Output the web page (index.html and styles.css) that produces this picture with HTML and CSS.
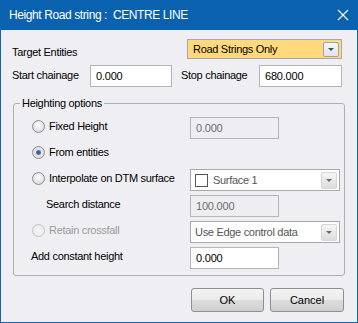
FILE: index.html
```html
<!DOCTYPE html>
<html lang="en">
  <head>
    <meta charset="utf-8" />
    <title>Height Road string</title>
    <link rel="stylesheet" href="styles.css">
  </head>

  <body>
    <div class="window">
      <div class="titlebar">
        <span class="title">Height Road string :&nbsp; CENTRE LINE</span>
        <svg class="close" width="12" height="12" viewBox="0 0 12 12">
          <path d="M1 1 L11 11 M11 1 L1 11" stroke="#fff" stroke-width="1.1" fill="none" />
        </svg>
      </div>

      <div class="content">
        <div class="row target-row">
          <span class="lbl target">Target Entities</span>
          <div class="combo yellow">
            <span class="combo-text">Road Strings Only</span>
            <span class="drop"></span>
          </div>
        </div>

        <div class="row chain-row">
          <span class="lbl chain">Start chainage</span>
          <input class="field start" type="text" value="0.000" />
          <span class="lbl chain stop">Stop chainage</span>
          <input class="field stopfield" type="text" value="680.000" />
        </div>

        <fieldset class="group">
          <legend>Heighting options</legend>
          <div class="opts">
            <label class="opt"><input type="radio" name="h" /> Fixed Height</label>
            <input class="field small disabled" type="text" value="0.000" disabled />

            <label class="opt"><input type="radio" name="h" checked /> From entities</label>
            <span></span>

            <label class="opt"><input type="radio" name="h" /> Interpolate on DTM surface</label>
            <div class="combo wide">
              <span class="check"></span>
              <span class="combo-text muted">Surface 1</span>
              <span class="drop dim"></span>
            </div>

            <span class="opt search">Search distance</span>
            <input class="field small disabled" type="text" value="100.000" disabled />

            <label class="opt off"><input type="radio" name="r" disabled /> Retain crossfall</label>
            <div class="combo wide">
              <span class="combo-text muted">Use Edge control data</span>
              <span class="drop dim"></span>
            </div>

            <span class="opt plain">Add constant height</span>
            <input class="field small" type="text" value="0.000" />
          </div>
        </fieldset>

        <div class="buttons">
          <button class="btn">OK</button>
          <button class="btn">Cancel</button>
        </div>
      </div>
    </div>
  </body>
</html>
```

FILE: styles.css
```css
* {
  box-sizing: border-box;
}

body {
  margin: 0;
  font-family: "Liberation Sans", Arial, sans-serif;
  font-size: 11px;
  letter-spacing: -0.3px;
  color: #000;
}

.window {
  width: 358px;
  height: 323px;
  border: 1px solid #1565b3;
  border-top: none;
  background-color: #efeff3;
}

.titlebar {
  height: 30px;
  background-color: #0a61b0;
  color: #fff;
  display: flex;
  align-items: center;
  justify-content: space-between;
  padding: 0 9px 0 9px;
  margin: 0 -1px;
}

.title {
  font-size: 12px;
  letter-spacing: -0.4px;
}

.content {
  padding: 0 13px 0 11px;
}

.row {
  display: flex;
}

.target-row {
  margin-top: 9px;
  height: 20px;
  align-items: flex-end;
}

.target {
  width: 175px;
  padding-bottom: 1px;
}

.chain-row {
  margin-top: 6px;
  height: 22px;
  align-items: center;
}

.chain {
  width: 78px;
  padding-bottom: 2px;
}

.stop {
  margin-left: 9px;
}

.field {
  height: 22px;
  border: 1px solid #b4b4b8;
  background-color: #fff;
  font-family: inherit;
  font-size: 11px;
  letter-spacing: -0.2px;
  padding: 0 0 0 5px;
  color: #000;
}

.start {
  width: 82px;
}

.stopfield {
  width: 83px;
}

.field.small {
  width: 89px;
}

.field.disabled {
  background-color: #eeeef2;
  color: #6d6d6d;
}

.combo {
  display: flex;
  align-items: center;
  height: 20px;
  width: 155px;
  border: 1px solid #a8a8ad;
  background-color: #fff;
  padding: 0 2px 0 5px;
}

.combo.yellow {
  background-color: #ffd97b;
}

.combo.wide {
  width: 150px;
  height: 22px;
  padding-left: 4px;
}

.combo-text {
  flex: 1;
  padding-bottom: 1px;
}

.muted {
  color: #555;
}

.check {
  width: 13px;
  height: 13px;
  border: 1px solid #555;
  background-color: #fff;
  margin-right: 5px;
}

.drop {
  width: 16px;
  height: 15px;
  border: 1px solid #a2a2a6;
  border-radius: 2px;
  background: linear-gradient(#f6f7f9, #dfe2e8);
  display: flex;
  align-items: center;
  justify-content: center;
}

.drop::after {
  content: "";
  border-left: 3px solid transparent;
  border-right: 3px solid transparent;
  border-top: 3px solid #4d4d55;
}

.drop.dim {
  height: 17px;
  border-color: #d6d6d8;
  background: linear-gradient(#f6f6f6, #dcdcdc);
}

.drop.dim::after {
  border-top-color: #6b6b6b;
}

.group {
  margin: 9px 0 0 1px;
  width: 332px;
  border: 1px solid #aeaeb4;
  border-radius: 3px;
  padding: 7px 0 6px 0;
}

.group legend {
  padding: 0 2px;
  margin-left: 6px;
  line-height: 14px;
}

.opts {
  display: grid;
  grid-template-columns: 176px 150px;
  grid-auto-rows: 22px;
  row-gap: 4px;
}

.opt {
  display: flex;
  align-items: center;
  padding-left: 18px;
  padding-bottom: 4px;
}

.opt input {
  appearance: none;
  width: 13px;
  height: 13px;
  margin: 0 4px 0 0;
  border-radius: 50%;
  border: 1px solid #8f8f93;
  background: radial-gradient(circle at 50% 40%, #ffffff 0, #e4e4e6 55%, #cfcfd3 100%);
}

.opt input:checked {
  background: radial-gradient(circle, #2d4f8f 0, #4f77b8 2px, #e4e4e6 3px, #e4e4e6 55%, #cfcfd3 100%);
}

.opt.off {
  color: #9a9a9a;
}

.opt.off input {
  border-color: #c4c4c6;
  background: radial-gradient(circle, #f4f4f4 0, #e8e8ea 100%);
}

.search {
  padding-left: 32px;
}

.plain {
  padding-left: 17px;
}

.buttons {
  display: flex;
  justify-content: flex-end;
  gap: 6px;
  margin-top: 12px;
}

.btn {
  height: 24px;
  width: 73px;
  border: 1px solid #8e8f92;
  border-radius: 3px;
  background: linear-gradient(#f3f3f3 0, #ebebeb 50%, #dddddd 51%, #cfcfcf 100%);
  font-family: inherit;
  font-size: 11px;
  color: #000;
  padding: 0;
}

.btn + .btn {
  width: 74px;
}
```
